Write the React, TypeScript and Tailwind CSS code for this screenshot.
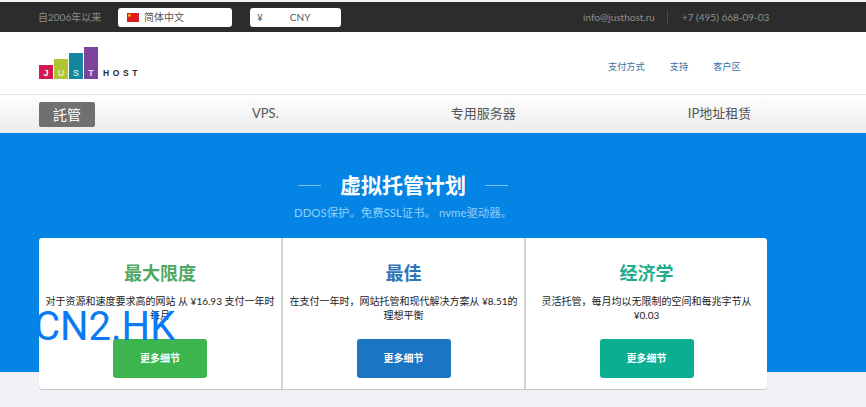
const sans = '"Lato", "Noto Sans CJK SC", sans-serif';

const plans = [
  {
    title: '最大限度',
    titleColor: 'text-[#4ea862]',
    body: '对于资源和速度要求高的网站 从 ¥16.93 支付一年时每月',
    button: 'bg-[#3cb54e]',
    cell: 'w-[242px] px-[5px]',
  },
  {
    title: '最佳',
    titleColor: 'text-[#2f76b8]',
    body: '在支付一年时，网站托管和现代解决方案从 ¥8.51的理想平衡',
    button: 'bg-[#1a75c4]',
    cell: 'w-[243px] px-[6px] border-l-2 border-[#d4d4d4]',
  },
  {
    title: '经济学',
    titleColor: 'text-[#20ad8c]',
    body: '灵活托管，每月均以无限制的空间和每兆字节从 ¥0.03',
    button: 'bg-[#0bae90]',
    cell: 'w-[243px] px-[14px] border-l-2 border-[#d4d4d4]',
  },
];

function Logo() {
  const bars = [
    { x: 0, y: 18, h: 14, fill: '#d5174f', letter: 'J', lc: '#ffffff' },
    { x: 15, y: 12, h: 20, fill: '#b0c434', letter: 'U', lc: '#e4ec9c' },
    { x: 30, y: 6, h: 26, fill: '#14879c', letter: 'S', lc: '#b7e6ee' },
    { x: 45, y: 0, h: 32, fill: '#7d4299', letter: 'T', lc: '#e7d8ef' },
  ];
  return (
    <svg width="102" height="32" viewBox="0 0 102 32">
      {bars.map((b) => (
        <g key={b.letter}>
          <rect x={b.x} y={b.y} width="14" height={b.h} fill={b.fill} />
          <text x={b.x + 7} y="29" textAnchor="middle" fontSize="9" fontWeight="700" fontFamily="Liberation Sans, sans-serif" fill={b.lc}>
            {b.letter}
          </text>
        </g>
      ))}
      <text x="64" y="29" fontSize="8.5" fontWeight="700" letterSpacing="3.6" fontFamily="Liberation Sans, sans-serif" fill="#2b2b2b">
        HOST
      </text>
    </svg>
  );
}

function ChinaFlag() {
  return (
    <svg width="12" height="9" viewBox="0 0 12 9">
      <rect width="12" height="9" fill="#d81e1e" />
      <rect x="1.2" y="1.2" width="2.4" height="2.4" fill="#f5c518" />
    </svg>
  );
}

export default function App() {
  return (
    <div className="relative h-[407px] w-[866px] overflow-hidden bg-[#f0f2f5]" style={{ fontFamily: sans }}>
      {/* top bar */}
      <div className="mt-[2px] flex h-[30px] items-center bg-[#2d2c2c] pl-[38px] text-[10px] text-[#8d8d8d]">
        <span className="w-[80px]">自2006年以来</span>
        <div className="flex h-[19px] w-[114px] items-center rounded-[3px] bg-white pl-[9px] text-[#555]">
          <ChinaFlag />
          <span className="ml-[5px]">简体中文</span>
        </div>
        <div className="ml-[18px] flex h-[19px] w-[91px] items-center rounded-[3px] bg-white pl-[7px] text-[#555]">
          <span>¥</span>
          <span className="ml-[27px]">CNY</span>
        </div>
        <span className="ml-[242px]">info@justhost.ru</span>
        <span className="ml-[12px] h-[14px] w-px bg-[#4a4a4a]" />
        <span className="ml-[14px]">+7 (495) 668-09-03</span>
      </div>

      {/* header */}
      <div className="flex h-[62px] items-center bg-white pl-[39px]">
        <Logo />
        <div className="ml-[467px] mt-[8px] flex gap-[25px] text-[9.2px] text-[#3b6ea5]">
          <span>支付方式</span>
          <span>支持</span>
          <span>客户区</span>
        </div>
      </div>

      {/* nav */}
      <div className="flex h-[39px] items-center border-t border-[#e2e2e2] bg-gradient-to-b from-white to-[#ebebeb] pl-[39px] text-[13px] text-[#555]">
        <span className="flex h-[25px] w-[56px] items-center justify-center rounded-[2px] bg-[#707070] text-[14px] text-white">託管</span>
        <span className="ml-[157px]">VPS.</span>
        <span className="ml-[172px]">专用服务器</span>
        <span className="ml-[172px]">IP地址租赁</span>
      </div>

      {/* hero */}
      <div className="h-[239px] bg-[#0484e4] pl-[39px] pt-[39px]">
        <div className="flex w-[728px] items-center justify-center">
          <span className="h-px w-[23px] bg-[#7cc0f2]" />
          <h1 className="mx-[19px] text-[21px] font-bold leading-[26px] text-white">虚拟托管计划</h1>
          <span className="h-px w-[23px] bg-[#7cc0f2]" />
        </div>
        <p className="mt-[7px] w-[728px] text-center text-[11.4px] leading-[16px] text-[#8fd0fa]">DDOS保护。免费SSL证书。 nvme驱动器。</p>

        <div className="mt-[17px] flex h-[151px] w-[728px] rounded-[3px] bg-white shadow-[0_1px_1px_rgba(0,0,0,0.18)]">
          {plans.map((p) => (
            <div key={p.title} className={`flex flex-col items-center pt-[23px] ${p.cell}`}>
              <h2 className={`text-[18px] font-bold leading-[24px] ${p.titleColor}`}>{p.title}</h2>
              <p className="mt-[9px] h-[32px] text-center text-[10px] leading-[14px] text-[#222]">{p.body}</p>
              <button className={`mt-[13px] h-[39px] w-[94px] rounded-[3px] text-[10px] font-bold text-white ${p.button}`}>更多细节</button>
            </div>
          ))}
        </div>
      </div>

      {/* watermark */}
      <div className="absolute left-[34px] top-[304px] text-[40px] leading-[46px] text-[#0a7bf2]" style={{ fontFamily: 'Roboto, sans-serif' }}>
        CN2.HK
      </div>
    </div>
  );
}
